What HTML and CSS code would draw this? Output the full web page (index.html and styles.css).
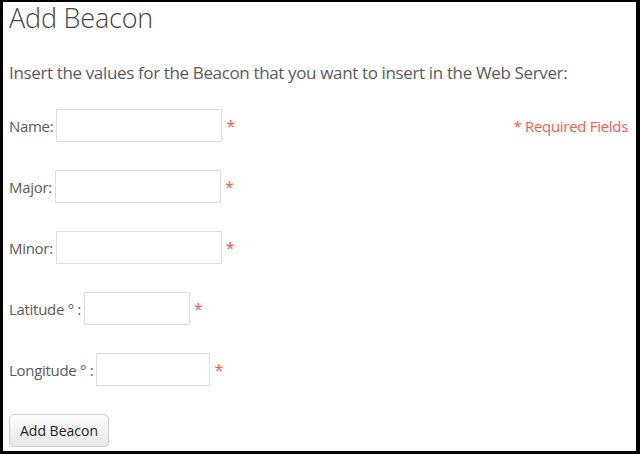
FILE: index.html
```html
<!DOCTYPE html>
<html>
<head>
<meta charset="utf-8">
<link rel="stylesheet" href="styles.css">
</head>
<body>
<div class="frame">
  <h1 class="title">Add Beacon</h1>
  <p class="intro">Insert the values for the Beacon that you want to insert in the Web Server:</p>
  <form class="form">
    <div class="row">
      <label class="field">Name:<input class="input w-name" type="text"><span class="req">*</span></label>
      <span class="req-note">* Required Fields</span>
    </div>
    <div class="row">
      <label class="field">Major:<input class="input w-major" type="text"><span class="req">*</span></label>
    </div>
    <div class="row">
      <label class="field">Minor:<input class="input w-minor" type="text"><span class="req">*</span></label>
    </div>
    <div class="row">
      <label class="field">Latitude ° :<input class="input w-lat" type="text"><span class="req">*</span></label>
    </div>
    <div class="row">
      <label class="field">Longitude ° :<input class="input w-lon" type="text"><span class="req">*</span></label>
    </div>
    <div class="row">
      <button class="btn" type="button">Add Beacon</button>
    </div>
  </form>
</div>
</body>
</html>
```

FILE: styles.css
```css
html, body {
  margin: 0;
  padding: 0;
  background: #000;
}
.frame {
  box-sizing: border-box;
  width: 640px;
  height: 454px;
  border-style: solid;
  border-color: #000;
  border-width: 2px 4px 3px 3px;
  background: #fff;
  padding: 0 8px 0 6px;
  font-family: "Open Sans", "Noto Sans", sans-serif;
  color: #5a5a5a;
  overflow: hidden;
}
.title {
  margin: 0;
  font-size: 27px;
  font-weight: 300;
  letter-spacing: -0.2px;
  line-height: 32px;
  color: #444;
}
.intro {
  margin: 27px 0 0 0;
  font-size: 17px;
  letter-spacing: -0.36px;
  line-height: 24px;
}
.form {
  margin-top: 24px;
  display: flex;
  flex-direction: column;
  gap: 28px;
}
.row {
  display: flex;
  align-items: center;
  justify-content: space-between;
  height: 33px;
}
.field {
  display: flex;
  align-items: center;
  font-size: 15px;
  letter-spacing: -0.3px;
  white-space: pre;
}
.input {
  box-sizing: border-box;
  height: 33px;
  margin: 0 0 0 3px;
  border: 1px solid #ddd;
  border-radius: 0;
  background: #fff;
  padding: 0 6px;
}
.w-name { width: 166px; }
.w-major { width: 166px; }
.w-minor { width: 166px; }
.w-lat { width: 106px; }
.w-lon { width: 114px; }
.req {
  color: #f55a4e;
  margin-left: 4px;
  font-size: 16px;
}
.req-note {
  color: #f55a4e;
  font-size: 15px;
  letter-spacing: -0.3px;
}
.btn {
  box-sizing: border-box;
  width: 100px;
  height: 33px;
  border: 1px solid #ccc;
  border-radius: 5px;
  background: linear-gradient(#fdfdfd, #e8e8e8);
  font-family: "Open Sans", "Noto Sans", sans-serif;
  font-size: 14px;
  color: #222;
  padding: 0;
}
```
